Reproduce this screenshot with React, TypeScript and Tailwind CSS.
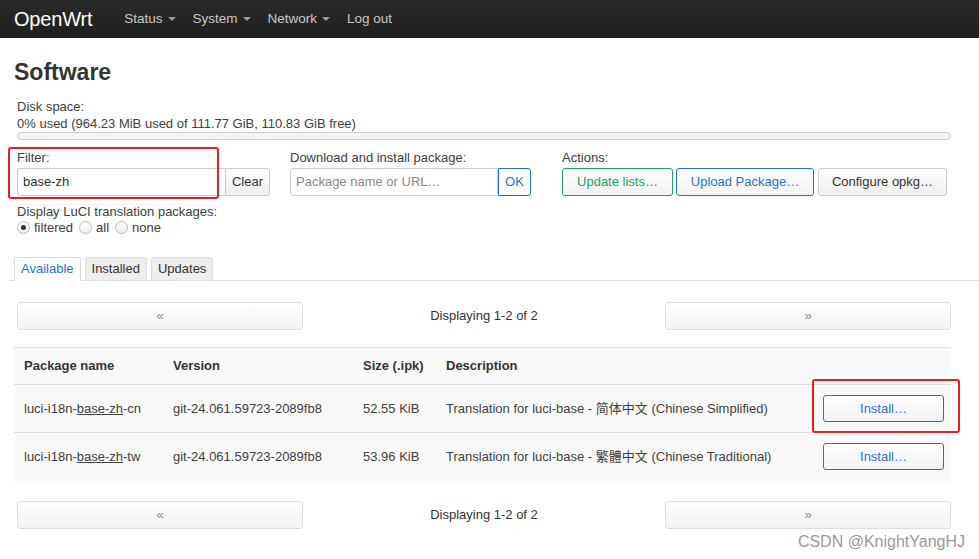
import React from "react";

const font = { fontFamily: '"Liberation Sans", Arial, "Noto Sans CJK SC", sans-serif' };

function Caret() {
  return <span className="ml-[5px] inline-block border-x-[4px] border-t-[4px] border-x-transparent border-t-[#9a9a9a] align-middle" />;
}

function Pager() {
  return (
    <div className="flex items-center pl-[3px]">
      <button className="h-[28px] w-[286px] rounded-[3px] border border-[#ddd] bg-gradient-to-b from-white to-[#f2f2f2] text-[13px] text-[#888]">«</button>
      <div className="flex-1 text-center text-[13px] text-[#333]">Displaying 1-2 of 2</div>
      <button className="h-[28px] w-[286px] rounded-[3px] border border-[#ddd] bg-gradient-to-b from-white to-[#f2f2f2] text-[13px] text-[#888]">»</button>
    </div>
  );
}

function Radio({ on, label }: { on?: boolean; label: string }) {
  return (
    <span className="mr-[6px] inline-flex items-center">
      <span className="mr-[4px] flex h-[13px] w-[13px] items-center justify-center rounded-full border border-[#bbb] bg-gradient-to-b from-white to-[#eee]">
        {on && <span className="h-[5px] w-[5px] rounded-full bg-[#333]" />}
      </span>
      {label}
    </span>
  );
}

const rows = [
  { n: "cn", ver: "git-24.061.59723-2089fb8", size: "52.55 KiB", desc: "Translation for luci-base - 简体中文 (Chinese Simplified)" },
  { n: "tw", ver: "git-24.061.59723-2089fb8", size: "53.96 KiB", desc: "Translation for luci-base - 繁體中文 (Chinese Traditional)" },
];

export default function App() {
  return (
    <div className="relative h-[559px] w-[979px] overflow-hidden bg-white text-[13px] text-[#404040]" style={font}>
      <header className="flex h-[38px] items-center bg-gradient-to-b from-[#2a2a2a] to-[#1f1f1f] pl-[14px]">
        <span className="mr-[32px] text-[20px] tracking-[-0.2px] text-white">OpenWrt</span>
        <nav className="flex gap-[17px] text-[13.5px] text-[#c8c8c8]">
          <span>Status<Caret /></span>
          <span>System<Caret /></span>
          <span>Network<Caret /></span>
          <span>Log out</span>
        </nav>
      </header>

      <main className="w-[951px] pl-[14px]">
        <h2 className="mt-[20px] text-[23px] font-bold leading-[28px] text-[#333]">Software</h2>

        <div className="mt-[12px] pl-[3px]">
          <div className="leading-[17px]">Disk space:</div>
          <div className="leading-[17px]">0% used (964.23 MiB used of 111.77 GiB, 110.83 GiB free)</div>
          <div className="h-[8px] rounded-[4px] border border-[#ccc] bg-[#f5f5f5]" />
        </div>

        <div className="mt-[9px] flex px-[3px]">
          <div className="w-[273px]">
            <div className="leading-[17px]">Filter:</div>
            <div className="mt-[2px] flex h-[28px]">
              <div className="flex w-[209px] items-center rounded-l-[3px] border border-[#ccc] px-[5px] text-[13px] text-[#333]">base-zh</div>
              <button className="w-[44px] rounded-r-[3px] border border-l-0 border-[#ccc] bg-gradient-to-b from-white to-[#eee] text-[#333]">Clear</button>
            </div>
          </div>
          <div className="w-[272px]">
            <div className="leading-[17px]">Download and install package:</div>
            <div className="mt-[2px] flex h-[28px]">
              <div className="flex w-[208px] items-center rounded-l-[3px] border border-[#ccc] px-[5px] text-[#888]">Package name or URL…</div>
              <button className="w-[33px] rounded-r-[3px] border border-[#1e73d9] bg-white text-[#1e73d9]">OK</button>
            </div>
          </div>
          <div>
            <div className="leading-[17px]">Actions:</div>
            <div className="mt-[2px] flex h-[28px] gap-[3px]">
              <button className="w-[111px] rounded-[3px] border border-[#1aa35a] bg-gradient-to-b from-white to-[#f3f3f3] text-[#1aa35a]">Update lists…</button>
              <button className="w-[138px] rounded-[3px] border border-[#1e73d9] bg-gradient-to-b from-white to-[#f3f3f3] text-[#1e73d9]">Upload Package…</button>
              <button className="ml-[1px] w-[129px] rounded-[3px] border border-[#ccc] bg-gradient-to-b from-white to-[#eee] text-[#333]">Configure opkg…</button>
            </div>
          </div>
        </div>

        <div className="mt-[8px] px-[3px]">
          <div className="leading-[16px]">Display LuCI translation packages:</div>
          <div className="flex leading-[15px]">
            <Radio on label="filtered" />
            <Radio label="all" />
            <Radio label="none" />
          </div>
        </div>

        <div className="-ml-[5px] mt-[22px] flex w-[970px] gap-[4px] border-b border-[#ddd] pl-[5px]">
          <span className="-mb-px rounded-t-[3px] border border-b-white border-[#ddd] bg-white px-[6px] leading-[22px] text-[#1e73d9]">Available</span>
          <span className="rounded-t-[3px] border border-b-0 border-[#ddd] bg-[#eee] px-[6px] leading-[22px] text-[#333]">Installed</span>
          <span className="rounded-t-[3px] border border-b-0 border-[#ddd] bg-[#eee] px-[6px] leading-[22px] text-[#333]">Updates</span>
        </div>

        <div className="mt-[21px]">
          <Pager />
        </div>

        <table className="mt-[17px] w-[937px] border-collapse bg-[#f9f9f9] text-left">
          <thead>
            <tr className="h-[37px] border-t border-[#ddd] font-bold text-[#333]">
              <th className="w-[149px] pl-[10px]">Package name</th>
              <th className="w-[190px] pl-[10px]">Version</th>
              <th className="w-[83px] pl-[10px]">Size (.ipk)</th>
              <th className="pl-[10px]">Description</th>
              <th className="w-[130px]" />
            </tr>
          </thead>
          <tbody>
            {rows.map((r) => (
              <tr key={r.n} className="h-[48px] border-t border-[#ddd]">
                <td className="pl-[10px]">luci-i18n-<span className="underline">base-zh</span>-{r.n}</td>
                <td className="pl-[10px]">{r.ver}</td>
                <td className="pl-[10px]">{r.size}</td>
                <td className="pl-[10px]">{r.desc}</td>
                <td>
                  <button className="ml-[2px] h-[27px] w-[121px] rounded-[3px] border border-[#1e73d9] bg-gradient-to-b from-white to-[#f2f2f2] text-[#1e73d9]">Install…</button>
                </td>
              </tr>
            ))}
          </tbody>
        </table>

        <div className="mt-[20px]">
          <Pager />
        </div>
      </main>

      <div className="absolute left-[8px] top-[147px] h-[52px] w-[211px] rounded-[3px] border-2 border-[#ee1c1c]" />
      <div className="absolute left-[812px] top-[379px] h-[54px] w-[148px] rounded-[3px] border-2 border-[#ee1c1c]" />
      <div className="absolute right-[14px] top-[530px] text-[16px] text-[#999]">CSDN @KnightYangHJ</div>
    </div>
  );
}
